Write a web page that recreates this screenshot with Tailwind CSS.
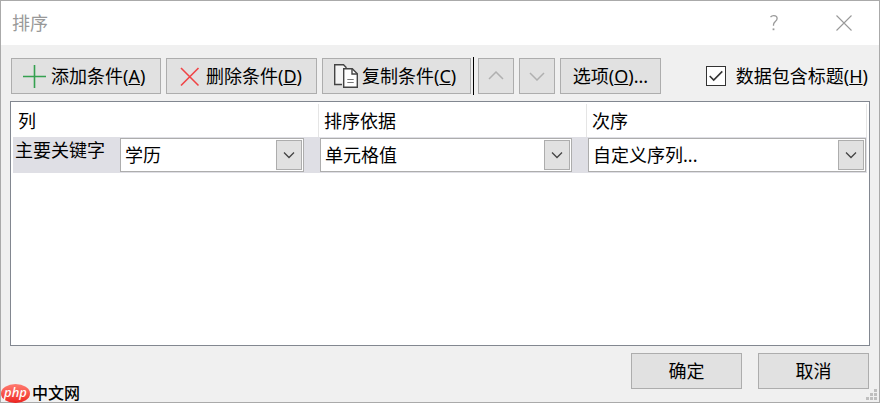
<!DOCTYPE html>
<html lang="zh-CN">
<head>
    <meta charset="UTF-8">
    <meta name="viewport" content="width=device-width, initial-scale=1.0">
    <title>排序</title>
    <script src="https://cdn.jsdelivr.net/npm/@tailwindcss/browser@4"></script>
</head>
<body class="font-['Noto_Sans','Noto_Sans_CJK_SC',sans-serif] text-[18px] leading-6 text-black">

    <div class="flex min-h-screen flex-col border border-[#aaaaaa] bg-[#f0f0f0]">

        <!-- Title bar -->
        <header class="flex h-11 items-center bg-white pr-[23px] pl-[11px] text-[#999999]">
            <h1>排序</h1>
            <button type="button" aria-label="帮助" class="ml-auto flex size-6 items-center justify-center">
                <svg width="10" height="18" viewBox="0 0 10 18" fill="none" stroke="currentColor" stroke-width="1.3">
                    <path d="M1.5 3.2C2.3 2.1 3.5 1.6 4.8 1.6c2 0 3.3 1.1 3.3 2.9 0 3.1-3.6 3.1-3.6 6.3v1"/>
                    <path d="M4.5 14.4v1.8" stroke-width="1.8"/>
                </svg>
            </button>
            <button type="button" aria-label="关闭" class="ml-[46px] flex size-6 items-center justify-center">
                <svg width="16" height="16" viewBox="0 0 16 16" stroke="currentColor" stroke-width="1.1"><path d="M.5.5l15 15M15.5.5l-15 15"/></svg>
            </button>
        </header>

        <main class="flex grow flex-col px-[9px] pt-3 pb-[13px]">

            <!-- Toolbar -->
            <div class="flex items-center gap-[5px] pl-px">
                <button type="button" class="flex h-9 w-[150px] items-center gap-[5px] border border-[#adadad] bg-[#e1e1e1] pl-[11px] whitespace-nowrap">
                    <svg class="shrink-0" width="23" height="23" viewBox="0 0 23 23" stroke="#35a150" stroke-width="1.6"><path d="M11.5 0v23M0 11.5h23"/></svg>
                    <span>添加条件(<u>A</u>)</span>
                </button>
                <button type="button" class="flex h-9 w-[151px] items-center gap-[5px] border border-[#adadad] bg-[#e1e1e1] pl-[11px] whitespace-nowrap">
                    <svg class="shrink-0" width="23" height="23" viewBox="0 0 23 23" stroke="#f04446" stroke-width="1.6"><path d="M3 3l17.5 17.5M20.5 3L3 20.5"/></svg>
                    <span>删除条件(<u>D</u>)</span>
                </button>
                <button type="button" class="flex h-9 w-[149px] items-center gap-1 border border-[#adadad] bg-[#e1e1e1] pl-[11px] whitespace-nowrap">
                    <svg class="shrink-0" width="24" height="24" viewBox="0 0 24 24" fill="none" stroke="#444444" stroke-width="1.4">
                        <path d="M8 20.5H.7V.7h8.8l2.5 2.5V4" fill="#f4f4f4"/>
                        <path d="M9.7 4.7h8.6l5 5v13.6H9.7z" fill="#ffffff"/>
                        <path d="M18 4.7V10h5.3"/>
                        <path d="M13.3 15.5h6.4M13.3 18.5h6.4" stroke="#777777" stroke-width="1.2"/>
                    </svg>
                    <span>复制条件(<u>C</u>)</span>
                </button>
                <div class="-mr-px -ml-[3px] h-[38px] w-px bg-black"></div>
                <button type="button" aria-label="上移" disabled class="flex size-9 items-center justify-center border border-[#adadad] bg-[#e1e1e1]">
                    <svg width="16" height="10" viewBox="0 0 16 10" fill="none" stroke="#b0b0b0" stroke-width="1.5"><path d="M1 8l7-7 7 7"/></svg>
                </button>
                <button type="button" aria-label="下移" disabled class="flex size-9 items-center justify-center border border-[#adadad] bg-[#e1e1e1]">
                    <svg width="16" height="10" viewBox="0 0 16 10" fill="none" stroke="#b0b0b0" stroke-width="1.5"><path d="M1 2l7 7 7-7"/></svg>
                </button>
                <button type="button" class="h-9 w-[101px] border border-[#adadad] bg-[#e1e1e1] whitespace-nowrap">选项(<u>O</u>)...</button>

                <label class="relative ml-auto flex items-center gap-[10px] pr-[2px] whitespace-nowrap">
                    <input type="checkbox" checked class="peer size-5 appearance-none border border-[#333333] bg-white">
                    <svg class="pointer-events-none invisible absolute left-[3px] peer-checked:visible" width="14" height="12" viewBox="0 0 14 12" fill="none" stroke="#333333" stroke-width="1.6"><path d="M.7 6l4 4L13.3 1.4"/></svg>
                    <span>数据包含标题(<u>H</u>)</span>
                </label>
            </div>

            <!-- Sort levels -->
            <div class="mt-[6px] grow border border-[#828790] bg-white px-[2px] pt-[2px]">
                <table class="w-full table-fixed border-separate border-spacing-0">
                    <thead>
                        <tr class="h-[33px] text-left">
                            <th class="w-[306px] border-r border-[#e5e5e5] pl-[5px] font-normal">列</th>
                            <th class="w-[268px] border-r border-[#e5e5e5] pl-[5px] font-normal">排序依据</th>
                            <th class="border-r border-[#e5e5e5] pl-[5px] font-normal">次序</th>
                        </tr>
                    </thead>
                    <tbody>
                        <tr class="h-9 bg-[#dfdfe5]">
                            <td class="p-0 pr-[15px] pl-[2px]">
                                <div class="flex justify-between">
                                    <label for="sort-key">主要关键字</label>
                                    <div class="relative w-[184px]">
                                        <select id="sort-key" class="block h-[34px] w-full appearance-none border border-[#adadad] bg-white pl-1">
                                            <option>学历</option>
                                        </select>
                                        <span class="pointer-events-none absolute top-[2px] right-[2px] flex h-[30px] w-[26px] items-center justify-center border border-[#adadad] bg-[#e1e1e1]">
                                            <svg width="12" height="8" viewBox="0 0 12 8" fill="none" stroke="#444444" stroke-width="1.3"><path d="M1 1.5l5 5 5-5"/></svg>
                                        </span>
                                    </div>
                                </div>
                            </td>
                            <td class="p-0 pr-[15px] pl-px">
                                <div class="relative">
                                    <select aria-label="排序依据" class="block h-[34px] w-full appearance-none border border-[#adadad] bg-white pl-1">
                                        <option>单元格值</option>
                                    </select>
                                    <span class="pointer-events-none absolute top-[2px] right-[2px] flex h-[30px] w-[26px] items-center justify-center border border-[#adadad] bg-[#e1e1e1]">
                                        <svg width="12" height="8" viewBox="0 0 12 8" fill="none" stroke="#444444" stroke-width="1.3"><path d="M1 1.5l5 5 5-5"/></svg>
                                    </span>
                                </div>
                            </td>
                            <td class="px-px py-0">
                                <div class="relative">
                                    <select aria-label="次序" class="block h-[34px] w-full appearance-none border border-[#adadad] bg-white pl-1">
                                        <option>自定义序列...</option>
                                    </select>
                                    <span class="pointer-events-none absolute top-[2px] right-[2px] flex h-[30px] w-[26px] items-center justify-center border border-[#adadad] bg-[#e1e1e1]">
                                        <svg width="12" height="8" viewBox="0 0 12 8" fill="none" stroke="#444444" stroke-width="1.3"><path d="M1 1.5l5 5 5-5"/></svg>
                                    </span>
                                </div>
                            </td>
                        </tr>
                    </tbody>
                </table>
            </div>

            <!-- Footer -->
            <footer class="mt-[7px] flex justify-end gap-4 pr-px">
                <button type="button" class="h-9 w-[111px] border border-[#adadad] bg-[#e1e1e1]">确定</button>
                <button type="button" class="h-9 w-[111px] border border-[#adadad] bg-[#e1e1e1]">取消</button>
            </footer>
        </main>
    </div>

    <!-- Watermark -->
    <div class="absolute bottom-0 left-0 flex h-5 items-center gap-[2px] pl-px leading-5">
        <span class="flex h-[19px] w-[29px] items-center justify-center rounded-[50%] bg-linear-to-b from-[#ff7a70] to-[#ee1c1c] pb-[2px] text-[13px] font-medium text-white italic">php</span>
        <span class="text-[16px] font-medium">中文网</span>
    </div>

    <!-- Resize grip -->
    <svg class="absolute right-[3px] bottom-[3px]" width="11" height="11" viewBox="0 0 11 11" fill="#bfbfbf">
        <path d="M8 0h3v3H8zM4 4h3v3H4zM8 4h3v3H8zM0 8h3v3H0zM4 8h3v3H4zM8 8h3v3H8z"/>
    </svg>
</body>
</html>
